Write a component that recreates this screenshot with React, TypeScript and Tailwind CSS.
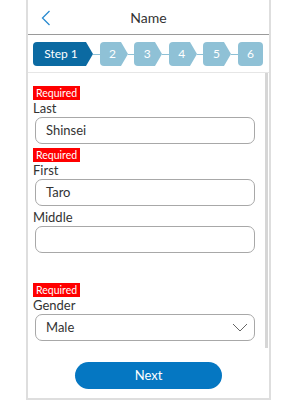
import React from "react";

const font = { fontFamily: "Lato, 'Open Sans', sans-serif" };

const Required = () => (
  <div className="flex">
    <span className="bg-[#ff0000] px-[3px] text-[10.5px] leading-[14px] text-white">
      Required
    </span>
  </div>
);

const Label = ({ text }: { text: string }) => (
  <div className="pt-[1px] text-[13px] leading-[15px] text-[#333]">{text}</div>
);

const Input = ({ value }: { value?: string }) => (
  <div className="ml-[2px] mr-[10px] mt-[1px] flex h-[27px] items-center rounded-[7px] border border-[#a8a8a8] px-[10px] text-[13px] text-[#333]">
    {value}
  </div>
);

const Arrow = ({ color }: { color: string }) => (
  <svg width="8" height="24" viewBox="0 0 8 24" className="shrink-0">
    <path d="M0 0 L1 0 L8 12 L1 24 L0 24 Z" fill={color} />
  </svg>
);

const Step = ({ label, active, last }: { label: string; active?: boolean; last?: boolean }) => {
  const bg = active ? "#0b6aa2" : "#8fc1d6";
  return (
    <div className="flex shrink-0">
      <div
        className={`flex h-[24px] items-center justify-center text-[12px] text-white ${
          active
            ? "w-[52px] rounded-l-[4px] bg-[#0b6aa2] pl-[4px]"
            : last
              ? "w-[25px] rounded-[4px] bg-[#8fc1d6]"
              : "w-[20px] rounded-l-[4px] bg-[#8fc1d6] pl-[6px]"
        }`}
      >
        {label}
      </div>
      {!last && <Arrow color={bg} />}
    </div>
  );
};

const Connector = () => <div className="h-[1px] flex-1 self-center bg-[#8fc1d6]" />;

export default function App() {
  return (
    <div className="h-[400px] w-[300px] bg-white" style={font}>
      <div className="ml-[26px] flex h-[400px] w-[245px] flex-col border-x-2 border-b-2 border-[#dedede]">
        {/* Header */}
        <div className="relative flex h-[35px] shrink-0 items-center justify-center border-b border-[#9a9a9a]">
          <svg width="10" height="16" viewBox="0 0 10 16" className="absolute left-[13px] top-[10px]">
            <path d="M8.5 1 L1.5 8 L8.5 15" fill="none" stroke="#2a8bd0" strokeWidth="1.3" />
          </svg>
          <span className="text-[14px] text-[#333]">Name</span>
        </div>

        {/* Stepper */}
        <div className="flex h-[38px] shrink-0 items-start border-b border-[#e6e6e6] pt-[7px] pl-[5px] pr-[6px]">
          <div className="flex w-full">
            <Step label="Step 1" active />
            <Connector />
            <Step label="2" />
            <Connector />
            <Step label="3" />
            <Connector />
            <Step label="4" />
            <Connector />
            <Step label="5" />
            <Connector />
            <Step label="6" last />
          </div>
        </div>

        {/* Content */}
        <div className="flex h-[275px] shrink-0">
          <div className="flex-1 pl-[5px] pt-[13px]">
            <Required />
            <Label text="Last" />
            <Input value="Shinsei" />
            <div className="h-[4px]" />
            <Required />
            <Label text="First" />
            <Input value="Taro" />
            <div className="h-[3px]" />
            <Label text="Middle" />
            <Input />
            <div className="h-[30px]" />
            <Required />
            <Label text="Gender" />
            <div className="ml-[2px] mr-[10px] mt-[1px] flex h-[27px] items-center justify-between rounded-[7px] border border-[#a8a8a8] pl-[10px] pr-[6px] text-[13px] text-[#333]">
              <span>Male</span>
              <svg width="16" height="9" viewBox="0 0 16 9">
                <path d="M1 1 L8 8 L15 1" fill="none" stroke="#666" strokeWidth="1" />
              </svg>
            </div>
          </div>
          <div className="mr-[1px] w-[3px] bg-[#d6d6d6]" />
        </div>

        {/* Footer */}
        <div className="flex flex-1 items-start justify-center pt-[14px]">
          <button className="h-[27px] w-[147px] rounded-full bg-[#0577c2] text-[13px] text-white">
            Next
          </button>
        </div>
      </div>
    </div>
  );
}
